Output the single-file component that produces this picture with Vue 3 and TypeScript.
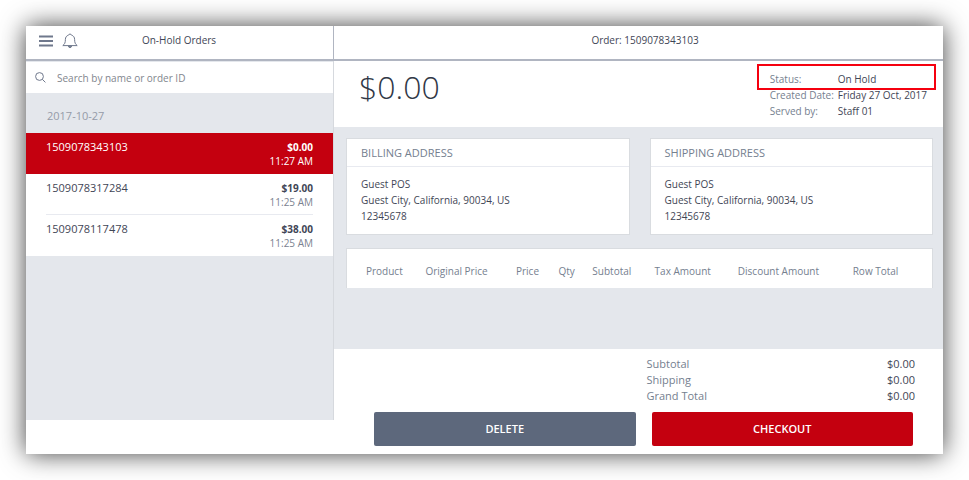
<script setup lang="ts">
import { ref } from 'vue'

interface Order {
  id: string
  total: string
  time: string
}

const orders: Order[] = [
  { id: '1509078343103', total: '$0.00', time: '11:27 AM' },
  { id: '1509078317284', total: '$19.00', time: '11:25 AM' },
  { id: '1509078117478', total: '$38.00', time: '11:25 AM' },
]
const selected = ref<string>(orders[0].id)
const query = ref('')

const addresses = [
  { title: 'BILLING ADDRESS', lines: ['Guest POS', 'Guest City, California, 90034, US', '12345678'] },
  { title: 'SHIPPING ADDRESS', lines: ['Guest POS', 'Guest City, California, 90034, US', '12345678'] },
]

const meta = [
  { label: 'Status:', value: 'On Hold', marked: true },
  { label: 'Created Date:', value: 'Friday 27 Oct, 2017', marked: false },
  { label: 'Served by:', value: 'Staff 01', marked: false },
]

const columns = ['Product', 'Original Price', 'Price', 'Qty', 'Subtotal', 'Tax Amount', 'Discount Amount', 'Row Total']

const totals = [
  { label: 'Subtotal', value: '$0.00' },
  { label: 'Shipping', value: '$0.00' },
  { label: 'Grand Total', value: '$0.00' },
]
</script>

<template>
  <div class="window">
    <aside class="sidebar">
      <header class="bar">
        <button class="icon-btn" type="button" aria-label="Menu">
          <svg width="14" height="12" viewBox="0 0 14 12"><path d="M0 1.500h14M0 6h14M0 10.500h14" stroke="#6f788c" stroke-width="1.800" /></svg>
        </button>
        <button class="icon-btn" type="button" aria-label="Notifications">
          <svg width="16" height="16" viewBox="0 0 16 16" fill="none" stroke="#6f788c" stroke-linejoin="round">
            <path d="M6.600 2.100C4.400 2.700 3.400 4.400 3.400 6.400c0 3.400-.8 4.800-2.600 6.200h14.400c-1.800-1.400-2.600-2.800-2.600-6.200 0-2-1-3.700-3.200-4.300C9.200.7 6.800.7 6.600 2.100Z" />
            <path d="M6.300 13.200c.3 1.800 3.100 1.800 3.400 0Z" fill="#6f788c" />
          </svg>
        </button>
        <h1 class="bar-title">On-Hold Orders</h1>
      </header>
      <div class="side-body">
        <label class="search">
          <svg width="11" height="11" viewBox="0 0 11 11" fill="none" stroke="#6f788c"><circle cx="4.500" cy="4.500" r="3.900" /><path d="M7.400 7.400 10.400 10.400" /></svg>
          <input v-model="query" type="text" placeholder="Search by name or order ID" aria-label="Search by name or order ID" />
        </label>
        <h2 class="date">2017-10-27</h2>
        <ul class="orders">
          <li v-for="order in orders" :key="order.id">
            <button type="button" class="order" :class="{ active: order.id === selected }" @click="selected = order.id">
              <span class="order-row">
                <span class="order-id">{{ order.id }}</span>
                <span class="order-info"><strong>{{ order.total }}</strong><span class="time">{{ order.time }}</span></span>
              </span>
            </button>
          </li>
        </ul>
      </div>
    </aside>

    <main class="detail">
      <header class="bar"><h2 class="bar-title">Order: {{ selected }}</h2></header>
      <section class="summary">
        <p class="amount">$0.00</p>
        <dl class="meta">
          <div v-for="item in meta" :key="item.label" class="meta-row" :class="{ marked: item.marked }">
            <dt>{{ item.label }}</dt>
            <dd>{{ item.value }}</dd>
          </div>
        </dl>
      </section>
      <section class="content">
        <div class="addresses">
          <article v-for="address in addresses" :key="address.title" class="card">
            <h3>{{ address.title }}</h3>
            <address><span v-for="line in address.lines" :key="line">{{ line }}</span></address>
          </article>
        </div>
        <div class="items">
          <table>
            <thead>
              <tr><th v-for="column in columns" :key="column" scope="col">{{ column }}</th></tr>
            </thead>
          </table>
        </div>
      </section>
      <footer class="footer">
        <dl class="totals">
          <div v-for="row in totals" :key="row.label">
            <dt>{{ row.label }}</dt>
            <dd>{{ row.value }}</dd>
          </div>
        </dl>
        <div class="actions">
          <button type="button" class="action">DELETE</button>
          <button type="button" class="action primary">CHECKOUT</button>
        </div>
      </footer>
    </main>
  </div>
</template>

<style>
body {
  background: #fff;
}
</style>

<style scoped>
* {
  box-sizing: border-box;
  margin: 0;
  padding: 0;
}
.window {
  display: grid;
  grid-template-columns: 308fr 609fr;
  min-height: calc(100vh - 52px);
  margin: 26px;
  background: #fff;
  box-shadow: 0 0 24px rgba(0, 0, 0, 0.75);
  font: 10px/16px "Open Sans", "Noto Sans", sans-serif;
  color: #3f4656;
}
button,
input {
  border: 0;
  background: none;
  font: inherit;
  color: inherit;
}
button {
  cursor: pointer;
}
ul {
  list-style: none;
}
.sidebar,
.detail {
  display: flex;
  flex-direction: column;
}
.sidebar {
  padding-bottom: 34px;
}
.bar {
  display: flex;
  align-items: center;
  gap: 9px;
  height: 35px;
  padding: 0 0 4px 13px;
  border-bottom: 2px solid #b0b5c1;
}
.sidebar .bar {
  border-right: 1px solid #b0b5c1;
}
.icon-btn {
  display: flex;
}
.bar-title {
  flex: 1;
  padding-bottom: 2px;
  font-size: 10px;
  font-weight: 400;
  text-align: center;
}
.sidebar .bar-title {
  padding-right: 62px;
}
.side-body {
  flex: 1;
  border-right: 1px solid #d6d9de;
  background: #e4e7ec;
}
.search {
  display: flex;
  align-items: center;
  gap: 11px;
  height: 32px;
  padding: 0 9px;
  border-top: 1px solid #e4e7ec;
  background: #fff;
}
.search input {
  flex: 1;
  min-width: 0;
  outline: 0;
}
.search input::placeholder {
  color: #82868e;
}
.date {
  padding: 15px 21px 9px;
  font-size: 11px;
  font-weight: 400;
  color: #959ba8;
}
.orders {
  background: #fff;
}
.order {
  display: block;
  width: 100%;
  padding: 0 20px;
  text-align: left;
}
.order-row {
  display: flex;
  justify-content: space-between;
  height: 41px;
  padding-top: 6px;
  border-bottom: 1px solid #e8eaf0;
}
.order.active .order-row,
li:last-child .order-row {
  border-color: transparent;
}
.order-id {
  font-size: 11px;
}
.order-info {
  display: flex;
  flex-direction: column;
  line-height: 14px;
  padding-top: 1px;
  text-align: right;
}
.time {
  color: #7b8290;
}
.order.active,
.order.active .time {
  background: #c4000f;
  color: #fff;
}
.summary {
  display: flex;
  justify-content: space-between;
  height: 66px;
  padding: 3px 7px 0 25px;
}
.amount {
  padding-top: 1px;
  font-size: 32px;
  font-weight: 300;
  line-height: 44px;
  color: #303746;
}
.meta-row {
  display: grid;
  grid-template-columns: 68px 1fr;
  padding: 0 9px 0 13px;
}
.meta {
  padding-top: 7px;
}
.meta-row.marked {
  position: relative;
}
.meta-row.marked::after {
  content: "";
  position: absolute;
  inset: -7px 0 -3px;
  border: 2px solid #f5000f;
}
dt {
  color: #75808f;
}
.content {
  flex: 1;
  padding: 11px 10px 61px 12px;
  background: #e4e7ec;
}
.addresses {
  display: grid;
  grid-template-columns: 1fr 1fr;
  gap: 20px;
}
.card {
  border: 1px solid #d9dce0;
  background: #fff;
}
.card h3 {
  padding: 6px 14px 5px;
  border-bottom: 1px solid #e8eaf0;
  font-size: 11px;
  font-weight: 400;
  color: #75808f;
}
address {
  display: flex;
  flex-direction: column;
  padding: 9px 14px 10px;
  font-style: normal;
}
.items {
  margin-top: 13px;
  padding: 14px 0 9px 19px;
  border: 1px solid #d9dce0;
  border-bottom: 0;
  background: #fff;
}
table {
  width: 100%;
  table-layout: fixed;
  border-collapse: collapse;
}
th {
  font-weight: 400;
  text-align: left;
  white-space: nowrap;
  color: #75808f;
}
th:nth-child(1) { width: 10.5%; }
th:nth-child(2) { width: 16%; }
th:nth-child(3) { width: 7.5%; }
th:nth-child(4) { width: 6%; }
th:nth-child(5) { width: 11%; }
th:nth-child(6) { width: 14.7%; }
th:nth-child(7) { width: 20.3%; }
.footer {
  padding: 7px 28px 8px 40px;
}
.totals {
  width: 50%;
  margin-left: auto;
  padding-left: 2px;
  font-size: 11px;
}
.totals div {
  display: flex;
  justify-content: space-between;
}
.actions {
  display: grid;
  grid-template-columns: 1fr 1fr;
  gap: 16px;
  margin-top: 8px;
  padding-right: 2px;
}
.action {
  height: 34px;
  border-radius: 2px;
  background: #5d687c;
  color: #fff;
  font-size: 11px;
  font-weight: 600;
}
.action.primary {
  background: #c4000f;
}
</style>
